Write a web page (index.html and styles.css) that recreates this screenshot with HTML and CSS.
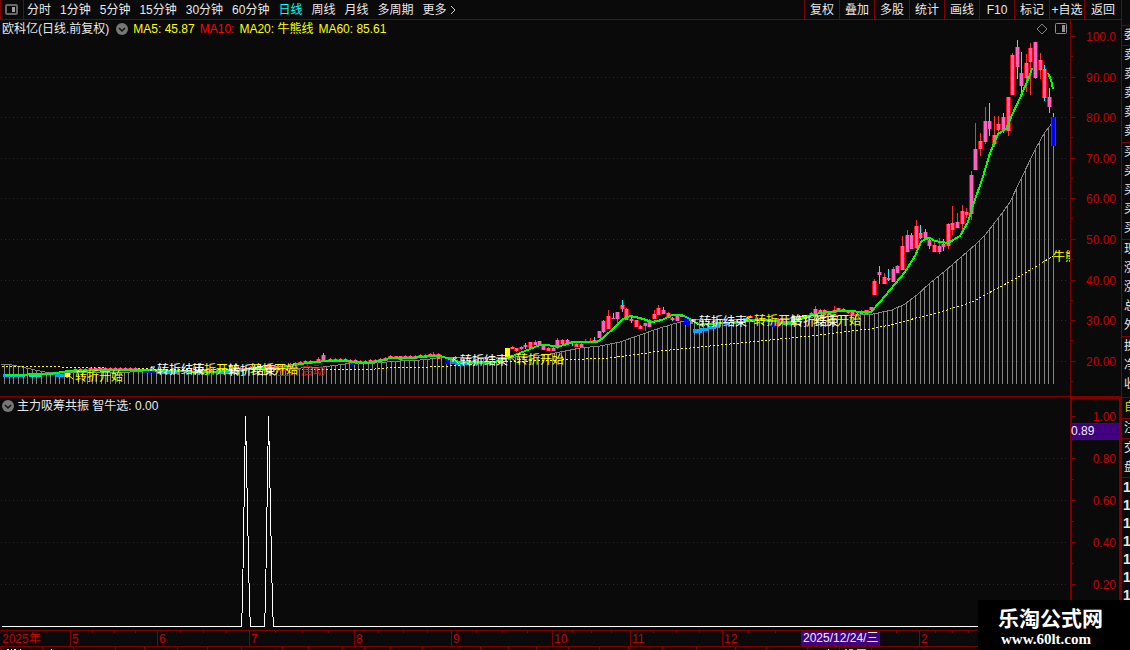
FILE: index.html
```html
<!DOCTYPE html>
<html lang="zh-CN">
<head>
<meta charset="utf-8">
<title>欧科亿 日线</title>
<link rel="stylesheet" href="styles.css">
</head>
<body>
<div class="terminal">
  <main class="main">
    <header class="toolbar">
      <button class="layout-toggle" aria-label="布局">
        <svg width="13" height="11" viewBox="0 0 13 11"><rect x="1" y="1" width="11" height="9" rx="1" fill="none" stroke="#686868" stroke-width="2"/><rect x="7" y="3" width="3" height="5" fill="#a0a0a0"/></svg>
      </button>
      <nav class="periods">
        <button>分时</button><button>1分钟</button><button>5分钟</button><button>15分钟</button><button>30分钟</button><button>60分钟</button><button class="active">日线</button><button>周线</button><button>月线</button><button>多周期</button><button class="more">更多<svg width="7" height="10" viewBox="0 0 7 10"><path d="M1 1L5 5L1 9" fill="none" stroke="#d0d0d0"/></svg></button>
      </nav>
      <div class="actions">
        <button>复权</button><button>叠加</button><button>多股</button><button>统计</button><button>画线</button><button>F10</button><button>标记</button><button>+自选</button><button>返回</button>
      </div>
    </header>

    <section class="panel">
      <div class="plot">
        <div class="legend">
          <span class="name">欧科亿(日线.前复权)</span>
          <svg class="chev" width="12" height="12" viewBox="0 0 12 12"><circle cx="6" cy="6" r="6" fill="#777"/><path d="M3 5L6 8L9 5" fill="none" stroke="#111" stroke-width="1.5"/></svg>
          <span class="yellow">MA5: 45.87</span>
          <span class="red">MA10:</span>
          <span class="yellow">MA20: 牛熊线</span>
          <span class="yellow">MA60: 85.61</span>
          <svg class="tools" width="32" height="12" viewBox="0 0 32 12"><path d="M6 1L11 6L6 11L1 6Z" fill="none" stroke="#808080"/><rect x="19.5" y=".5" width="11" height="10" rx="1" fill="none" stroke="#909090"/><rect x="26" y="2" width="3" height="7" fill="#909090"/></svg>
        </div>
        <svg class="chart" viewBox="0 38 1070 358">
          <g class="grid" id="grid"></g>
          <g id="bars"></g>
          <polyline class="ma60" id="ma60"/>
          <polyline class="ma20" id="ma20"/>
          <g id="candles" shape-rendering="crispEdges"></g>
          <g class="ma5" id="ma5"></g>
          <g class="marks">
            <path class="arrow-y" d="M73 379L67 374M67 378V374H71"/>
            <path class="arrow-w" d="M157 371L151 367M151 371V367H155"/>
            <path class="arrow-w" d="M459 364L453 358M453 362V358H457"/>
            <path class="arrow-y" d="M515 361L509 356M509 360V356H513"/>
            <path class="arrow-w" d="M698 325L692 320M692 324V320H696"/>
            <path class="arrow-y" d="M753 322L747 317M747 321V317H751"/>
            <text class="r" x="277" y="375">主升启动</text>
            <text class="y" x="75" y="381">转折开始</text>
            <text class="y" x="192" y="374">转折开始</text>
            <text class="w" x="157" y="374">转折结束</text>
            <text class="y" x="250" y="374">转折开始</text>
            <text class="w" x="228" y="375">转折结束</text>
            <text class="w" x="460" y="365">转折结束</text>
            <text class="y" x="516" y="364">转折开始</text>
            <text class="w" x="699" y="326">转折结束</text>
            <text class="y" x="754" y="325">转折开始</text>
            <text class="y" x="813" y="325">转折开始</text>
            <text class="w" x="791" y="326">转折结束</text>
            <text class="y" x="1053" y="261">牛熊线</text>
          </g>
        </svg>
      </div>
      <svg class="axis" id="priceAxis" viewBox="1070 20 51 376"></svg>
    </section>

    <section class="panel lower">
      <div class="plot">
        <div class="legend sub">
          <svg class="chev" width="12" height="12" viewBox="0 0 12 12"><circle cx="6" cy="6" r="6" fill="#777"/><path d="M3 5L6 8L9 5" fill="none" stroke="#111" stroke-width="1.5"/></svg>
          <span>主力吸筹共振 智牛选: 0.00</span>
        </div>
        <svg class="chart" viewBox="0 415 1070 215">
          <g class="grid" id="grid2"></g>
          <polyline class="signal" points="2,626.5 241.5,626.5 242.5,600 245.5,416 249.5,606 250.5,626.5 264.5,626.5 265.5,600 268.5,416 272.5,606 273.5,626.5 1070,626.5"/>
        </svg>
      </div>
      <svg class="axis" id="signalAxis" viewBox="1070 397 51 233"></svg>
    </section>

    <svg class="dates" id="dates" viewBox="0 630 1121 20"></svg>
  </main>

  <aside class="quotes">
    <div>委</div>
    <div class="group">卖<br>卖<br>卖<br>卖<br>卖</div>
    <div class="group">买<br>买<br>买<br>买<br>买</div>
    <div class="group">现<br>涨<br>涨<br>总<br>外</div>
    <div class="group tall">换<br>净<br>收</div>
    <div class="group own">自</div>
    <div>注</div>
    <div>交<br>盘</div>
    <div class="ticks">1<br>1<br>1<br>1<br>1<br>1<br>1</div>
  </aside>
</div>
<footer class="brand"><strong>乐淘公式网</strong><span>www.60lt.com</span></footer>
<script src="chart.js"></script>
</body>
</html>
```
FILE: styles.css
```css
* { box-sizing: border-box; }

body {
  margin: 0;
  background: #0a0a0a;
  color: #e8e8e8;
  font: 12px/18px "Liberation Sans", "Noto Sans CJK SC", sans-serif;
  overflow: hidden;
}

button {
  padding: 0;
  border: 0;
  background: none;
  color: inherit;
  font: inherit;
  white-space: nowrap;
}

svg { display: block; }

.terminal { display: flex; min-height: 100vh; }
.main { flex: 1; min-width: 0; }

.toolbar {
  display: flex;
  height: 20px;
  border-bottom: 1px solid #800000;
}
.layout-toggle {
  display: flex;
  align-items: center;
  width: 24px;
  padding-left: 4px;
  border-right: 1px solid #800000;
  border-left: 1px solid #800000;
}
.periods { display: flex; gap: 9px; padding-left: 3px; }
.periods .active { color: #00ffff; }
.more { display: flex; align-items: center; gap: 3px; }
.actions { display: flex; margin-left: auto; }
.actions button { width: 35px; border-left: 1px solid #800000; }
.actions button:last-child { width: 37px; }

.panel {
  display: grid;
  grid-template-columns: minmax(0, 1070fr) minmax(0, 51fr);
}
.lower { border-top: 1px solid #800000; }
.legend {
  display: flex;
  align-items: center;
  gap: 5px;
  height: 18px;
  padding: 0 2px;
  white-space: nowrap;
}
.name { padding-right: 2px; }
.sub { gap: 3px; }
.tools { margin-left: auto; }
.yellow { color: #ffff00; }
.red { color: #ff0000; }
.chart, .axis, .dates { width: 100%; height: auto; }

.grid line { stroke: #800000; stroke-dasharray: 1 3; shape-rendering: crispEdges; }
#bars line { stroke: #848484; shape-rendering: crispEdges; }
.ma60 { fill: none; stroke: #848484; shape-rendering: crispEdges; }
.ma20 { fill: none; stroke: #ffff00; stroke-dasharray: 2 2; shape-rendering: crispEdges; }
.ma5 polyline { fill: none; stroke: #00ff00; stroke-width: 2; shape-rendering: crispEdges; }
.signal { fill: none; stroke: #ffffff; shape-rendering: crispEdges; }
.arrow-y, .arrow-w { fill: none; stroke: #ffff00; }
.arrow-w { stroke: #ffffff; }
.y { fill: #ffff00; }
.w { fill: #ffffff; }
.r { fill: #e01010; }
.axis path, .dates path { fill: none; stroke: #800000; }
.axis .frame { stroke-width: 2; }
.axis text, .dates text { fill: #c80000; }
.axis .tag, .dates .tag { fill: #400080; stroke: #800000; }
.axis .now, .dates .now { fill: #f0f0f0; }

.quotes {
  width: 9px;
  padding-top: 25px;
  border-left: 1px solid #800000;
  line-height: 19px;
  overflow: hidden;
}
.quotes div {
  padding-left: 2px;
  border-top: 1px solid #800000;
  white-space: nowrap;
}
.quotes .group { padding-bottom: 1px; }
.quotes .tall { padding-bottom: 3px; }
.quotes .own { color: #d8d800; }
.quotes .ticks { padding-left: 1px; font-size: 14px; font-weight: bold; line-height: 18px; }

.brand {
  position: fixed;
  right: 0;
  bottom: 0;
  display: flex;
  flex-direction: column;
  width: 152px;
  height: 50px;
  padding: 8px 0 0 20px;
  background: #000;
  color: #fff;
}
.brand strong { font-size: 21px; line-height: 22px; }
.brand span {
  padding-left: 3px;
  font: bold 15px/18px "Liberation Serif", serif;
}
```
FILE: chart.js
```js
const NS = 'http://www.w3.org/2000/svg';
const $ = id => document.getElementById(id);
function add(parent, tag, attrs, text) {
  const el = document.createElementNS(NS, tag);
  for (const k in attrs) el.setAttribute(k, attrs[k]);
  if (text !== undefined) el.textContent = text;
  parent.appendChild(el);
  return el;
}
function at(points, x) {
  for (let i = 1; i < points.length; i++) {
    const [x0, y0] = points[i - 1], [x1, y1] = points[i];
    if (x <= x1) return y0 + (y1 - y0) * (x - x0) / (x1 - x0);
  }
  return points[points.length - 1][1];
}

const ma60 = [[1,364],[12,365],[22,367],[35,370],[50,373],[75,372],[130,372],[200,370],[280,369],[323,367],[345,364],[375,363],[400,361],[420,360],[440,358],[455,357],[500,358],[545,355],[560,352],[580,348],[600,346],[620,342],[640,335],[660,328],[680,322],[700,319],[740,320],[780,319],[830,316],[860,315],[873,314],[892,310],[905,304],[917,295],[930,283],[945,271],[960,258],[975,245],[985,235],[1000,216],[1010,202],[1020,181],[1035,150],[1045,132],[1053,122]];
const ma20 = [[2,366],[30,366],[60,367],[150,369],[280,369],[375,369],[400,367],[430,367],[450,366],[500,362],[560,360],[610,358],[640,354],[660,351],[700,347],[740,343],[780,339],[820,335],[850,331],[870,329],[890,325],[905,321],[920,317],[940,312],[960,306],[972,302],[985,295],[1000,287],[1015,279],[1030,270],[1045,261],[1053,256]];
const ma5 = [
  [[5,375],[50,374],[68,371],[110,370],[150,370],[200,372],[235,371],[260,368],[280,368],[300,364],[325,361],[345,361],[365,363],[380,361],[390,358],[410,358],[430,356],[440,356],[450,359],[460,362],[495,362],[510,357],[525,351],[540,345],[560,346],[575,342],[597,342],[603,338],[615,327],[623,319],[630,316],[640,318],[652,322],[662,320],[672,315],[682,315],[690,319],[700,325],[720,323],[740,322],[760,320],[775,321],[785,324],[795,322],[805,317],[820,313],[840,311],[871,312],[880,302],[895,284],[905,272],[915,256],[921,242],[925,239],[930,238],[935,241],[948,243],[960,236],[968,222],[973,205],[982,180],[990,153],[998,134],[1006,129],[1012,115],[1020,98],[1030,75],[1032,68]],
  [[1048,73],[1051,80],[1053,89]]
];

[77,117,158,198,239,280,320,361].forEach(y => add($('grid'), 'line', {x1:1, x2:1068, y1:y+.5, y2:y+.5}));
[458,500,542,584].forEach(y => add($('grid2'), 'line', {x1:1, x2:1068, y1:y+.5, y2:y+.5}));
for (let i = 0; i < 230; i++) {
  const x = Math.round(1053 - i * 4.6);
  if (x > 0) add($('bars'), 'line', {x1:x+.5, x2:x+.5, y1:at(ma60, x), y2:384});
}
$('ma60').setAttribute('points', ma60.join(' '));
$('ma20').setAttribute('points', ma20.join(' '));
ma5.forEach(p => add($('ma5'), 'polyline', {points: p.join(' ')}));

/* x, high, body top, body bottom, low, wick: r = rising, c = falling */
const data = [
[323,353,355,361,361,'c'],[318,357,359,362,362,'r'],[396,356,356,358,358,'r'],[400,356,356,360,360,'r'],[433,352,354,357,357,'r'],[438,353,354,359,359,'r'],
[512,346,347,349,349,'r'],[516,348,348,351,352,'r'],[521,346,347,349,350,'r'],[525,343,345,347,349,'c'],[530,342,342,348,348,'r'],[535,340,342,345,345,'r'],[539,341,341,346,346,'r'],[543,344,345,350,350,'r'],[548,347,348,351,351,'r'],[553,346,348,351,351,'r'],[557,338,340,348,349,'r'],[562,339,340,344,345,'r'],[567,339,340,343,343,'c'],[572,341,341,343,346,'c'],[576,343,344,347,347,'r'],[581,343,344,347,348,'r'],[585,339,341,343,343,'r'],[590,338,341,343,343,'r'],[594,337,340,343,343,'c'],[599,331,331,338,338,'r'],
[603,320,321,332,333,'c'],[608,310,316,329,329,'r'],[613,313,318,319,319,'c'],[617,312,312,319,323,'r'],[622,300,305,309,312,'c'],[626,308,309,320,320,'r'],[631,317,319,321,323,'c'],[636,320,320,327,327,'r'],[640,325,326,329,329,'r'],[645,323,323,326,331,'r'],[649,319,320,327,327,'r'],[654,310,314,319,319,'r'],[658,305,308,315,315,'r'],[663,307,310,314,314,'c'],[668,312,313,318,318,'r'],[672,317,318,320,321,'c'],[677,315,316,321,321,'r'],[681,314,315,317,317,'r'],
[750,315,316,318,318,'r'],[778,318,320,326,327,'r'],[783,319,321,324,324,'r'],[811,312,313,316,316,'r'],[815,306,309,316,316,'r'],[820,309,310,314,314,'r'],[824,309,310,315,316,'r'],[829,311,312,315,315,'r'],[834,306,310,313,313,'r'],[838,308,308,311,311,'r'],[843,308,309,312,312,'r'],[848,310,311,313,314,'r'],[852,311,312,315,315,'r'],[857,311,314,315,315,'c'],[861,310,312,314,315,'r'],[866,310,310,314,314,'r'],[871,307,307,310,310,'r'],
[874,279,281,295,295,'r'],[879,266,272,275,284,'c'],[884,273,277,284,284,'r'],[888,269,278,280,281,'c'],[893,267,269,282,282,'r'],[897,265,266,273,273,'r'],[902,236,246,270,270,'r'],[907,230,235,252,252,'r'],[911,233,235,249,249,'c'],[916,220,226,248,249,'r'],[920,225,233,238,239,'c'],[925,229,232,238,238,'c'],[929,239,240,246,249,'c'],[934,242,245,252,252,'r'],[939,238,246,252,254,'r'],[943,239,244,247,251,'c'],[948,223,224,246,249,'r'],[952,206,223,230,235,'r'],[957,213,222,228,228,'r'],[962,205,211,224,233,'r'],[966,208,212,215,218,'r'],[971,171,175,214,220,'r'],[975,123,149,170,170,'r'],[980,133,141,149,156,'r'],[985,107,121,142,144,'r'],[989,103,121,129,136,'c'],[994,116,135,144,147,'r'],[998,116,124,130,136,'r'],[1003,113,117,131,133,'c'],[1008,97,97,131,136,'r'],[1012,53,55,95,95,'r'],[1017,40,47,67,79,'c'],[1021,52,73,86,97,'c'],[1026,54,63,78,92,'r'],[1030,43,48,62,95,'r'],[1035,42,42,78,79,'r'],[1040,53,60,70,79,'r'],[1044,65,69,98,101,'c'],[1049,88,97,107,113,'c']];
for (let x = 75; x < 433; x += 5) {
  if ((x > 138 && x < 190) || (x > 210 && x < 238) || (x > 314 && x < 326) || (x > 392 && x < 403)) continue;
  const y = Math.round(at(ma5[0], x));
  data.push([x, y - 3, y - 2, y + 1, y + 1, 'r']);
}
data.forEach(([x, hi, top, bot, lo, kind]) => {
  const g = $('candles');
  add(g, 'rect', {x, y:hi, width:1, height:Math.max(1, lo-hi), fill:kind === 'c' ? '#00ffff' : '#ff3030'});
  add(g, 'rect', {x:x-2, y:top, width:5, height:bot-top, fill:'#ff0000'});
  add(g, 'rect', {x:x-1, y:top, width:3, height:bot-top, fill:'#ff60c0'});
});
/* trend blocks: x, y, width, height, colour */
[[3,374,22,3,'#00a8ff'],[29,374,12,3,'#00d8ff'],[43,373,14,2,'#00a8ff'],[56,374,8,3,'#00a8ff'],[65,373,5,4,'#ffff00'],[143,371,12,2,'#0000ff'],[157,371,20,3,'#00b8ff'],[178,370,10,2,'#00d8ff'],[194,370,8,2,'#0000ff'],[205,371,8,2,'#0000ff'],[216,371,20,3,'#00b8ff'],[350,363,5,2,'#0000ff'],[445,358,5,6,'#0000ff'],[451,360,5,4,'#0080ff'],[456,362,12,3,'#00a8ff'],[468,361,24,3,'#00a8ff'],[494,359,8,2,'#0000ff'],[505,348,5,10,'#ffff00'],[684,316,5,9,'#0000ff'],[693,329,9,4,'#00a8ff'],[700,328,8,3,'#00a8ff'],[707,326,9,3,'#00a8ff'],[714,323,6,5,'#00a8ff'],[724,319,5,6,'#0000ff'],[731,321,12,3,'#00a8ff'],[743,318,6,4,'#00a8ff'],[763,320,6,3,'#0000ff'],[771,319,5,8,'#0000ff'],[785,321,7,4,'#00a8ff'],[792,317,9,4,'#00a8ff'],[802,315,5,4,'#ffff00']]
.forEach(([x,y,width,height,fill]) => add($('candles'), 'rect', {x,y,width,height,fill}));
add($('candles'), 'rect', {x:1053, y:113, width:1, height:4, fill:'#00ffff'});
add($('candles'), 'rect', {x:1051, y:117, width:5, height:29, fill:'#c00060'});
add($('candles'), 'rect', {x:1052, y:117, width:3, height:29, fill:'#0000ff'});

const pa = $('priceAxis');
let d = 'M1070.5 20V396';
[36,77,117,158,198,239,280,320,361].forEach((y, i) => {
  d += `M1071 ${y+.5}h5M1071 ${y+20.5}h2`;
  add(pa, 'text', {x:1116, y:y+5, 'text-anchor':'end'}, i ? (100 - i*10) + '.00' : '100.0');
});
add(pa, 'path', {d});

const sa = $('signalAxis');
add(sa, 'path', {class:'frame', d:'M1071 630V398H1120V630'});
d = '';
[416,458,500,542,584].forEach((y, i) => {
  d += `M1072 ${y+.5}h4M1072 ${y+21.5}h2`;
  add(sa, 'text', {x:1116, y:y+5, 'text-anchor':'end'}, (1 - i*.2).toFixed(2));
});
add(sa, 'path', {d});
add(sa, 'rect', {class:'tag', x:1070.5, y:423.5, width:49, height:16});
add(sa, 'text', {class:'now', x:1071, y:435}, '0.89');

const da = $('dates');
d = 'M0 630.5H1121M0 646.5H1121';
[[70,'5'],[157,'6'],[249,'7'],[354,'8'],[451,'9'],[552,'10'],[630,'11'],[722,'12'],[919,'2']].forEach(([x, t]) => {
  d += `M${x+.5} 631V646`;
  add(da, 'text', {x:x+2, y:643}, t);
});
[92,114,135,180,203,226,275,302,328,378,403,427,476,502,527,572,591,611,653,676,699,748,775,896,935,952,968].forEach(x => d += `M${x+.5} 631v2`);
[0,42,73,115,144,177,207,241,282,308,342,364,390,422,480,508,536,568,599,628,662,696,735,766,807,839,871].forEach(x => d += `M${x+.5} 647v3`);
add(da, 'path', {d});
add(da, 'text', {x:2, y:643}, '2025年');
add(da, 'rect', {class:'tag', x:801.5, y:630.5, width:78, height:16});
add(da, 'text', {class:'now', x:803, y:642}, '2025/12/24/三');
add(da, 'path', {d:'M7 649.5h2M11 649.5h1M14 649.5h2M20 649.5h1M51 649.5h1M828 649.5h1', style:'stroke:#ffffff'});
add(da, 'path', {d:'M845 649.5h2M849 649.5h4M857 649.5h9', style:'stroke:#00ffff'});
```
